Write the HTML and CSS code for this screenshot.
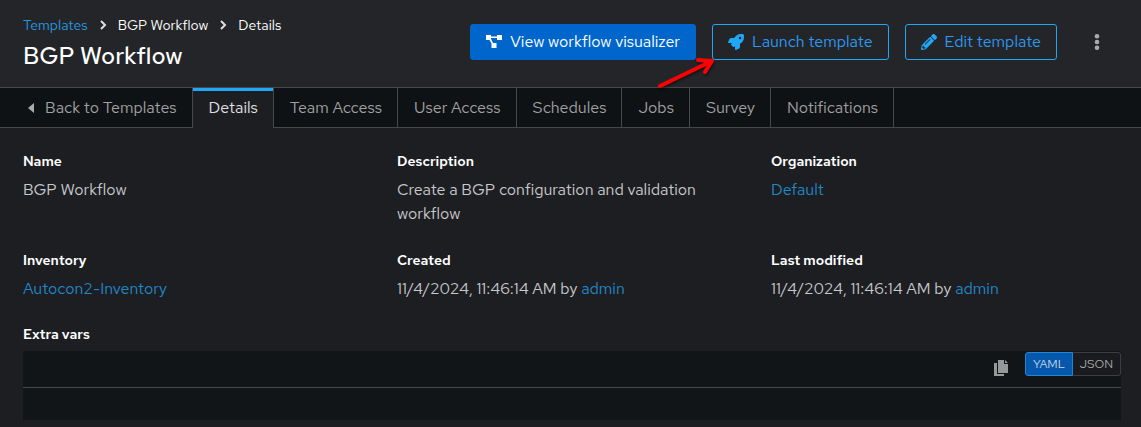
FILE: index.html
```
<!DOCTYPE html>
<html lang="en">
<head>
<meta charset="utf-8">
<title>BGP Workflow</title>
<link rel="stylesheet" href="styles.css">
</head>
<body>
<header class="page-header">
  <div class="heading">
    <nav class="breadcrumb" aria-label="Breadcrumb">
      <a class="link" href="#">Templates</a>
      <svg class="chevron" viewBox="0 0 8 10" aria-hidden="true"><path d="M2 1l4 4-4 4"/></svg>
      <span>BGP Workflow</span>
      <svg class="chevron" viewBox="0 0 8 10" aria-hidden="true"><path d="M2 1l4 4-4 4"/></svg>
      <span>Details</span>
    </nav>
    <h1 class="title">BGP Workflow</h1>
  </div>
  <div class="actions">
    <button class="button primary" type="button">
      <svg class="icon" viewBox="0 0 16 16" aria-hidden="true"><path d="M0 1h5v1.500h6V1h5v5h-5V4H5v1l2 4h3.500v5h-5V9.500L3.500 6H0z"/></svg>
      View workflow visualizer
    </button>
    <button class="button outline" type="button">
      <svg class="icon" viewBox="0 0 512 512" aria-hidden="true"><path d="M505.120 19.094c-1.189-5.531-6.658-11-12.207-12.188C460.716 0 435.507 0 410.407 0 307.175 0 245.269 55.203 199.052 128H94.838c-16.348.016-35.557 11.875-42.887 26.484L2.516 253.297A28.400 28.400 0 0 0 0 264a24.008 24.008 0 0 0 24.006 24h103.845l-22.475 22.469c-11.365 11.361-12.996 32.257 0 45.250L156.248 406.625c11.156 11.188 32.156 13.156 45.277 0L224 384.125V488a24.008 24.008 0 0 0 24 24 28.559 28.559 0 0 0 10.700-2.516l98.728-49.391c14.629-7.297 26.508-26.500 26.508-42.859V312.797c72.594-46.313 128.032-108.406 128.032-211.094.083-25.203.083-50.406-6.848-82.609zM384 168a40 40 0 1 1 40-40 40.023 40.023 0 0 1-40 40z"/></svg>
      Launch template
    </button>
    <button class="button outline" type="button">
      <svg class="icon" viewBox="0 0 512 512" aria-hidden="true"><path fill-rule="evenodd" d="M497.900 142.100l-46.100 46.100c-4.700 4.700-12.300 4.700-17 0l-111-111c-4.700-4.700-4.700-12.300 0-17l46.100-46.100c18.700-18.700 49.100-18.700 67.900 0l60.100 60.100c18.800 18.700 18.800 49.100 0 67.900zM284.200 99.800L21.600 362.400.4 483.900c-2.900 16.400 11.400 30.600 27.800 27.800l121.500-21.300 262.600-262.600c4.700-4.700 4.700-12.300 0-17l-111-111c-4.800-4.700-12.400-4.700-17.100 0zM124.100 339.900c-5.500-5.500-5.500-14.300 0-19.800l154-154c5.500-5.500 14.300-5.500 19.800 0s5.500 14.300 0 19.800l-154 154c-5.500 5.500-14.300 5.500-19.800 0zM88 424h48v36.300l-64.500 11.300-31.100-31.100L51.700 376H88v48z"/></svg>
      Edit template
    </button>
    <button class="kebab" type="button" aria-label="More actions">
      <svg class="icon" viewBox="0 0 16 16" aria-hidden="true"><circle cx="8" cy="2.300" r="2.300"/><circle cx="8" cy="8" r="2.300"/><circle cx="8" cy="13.700" r="2.300"/></svg>
    </button>
    <svg class="pointer" viewBox="0 0 60 34" aria-hidden="true"><path d="M4 29L56 4M42 3l14 1-7 11"/></svg>
  </div>
</header>
<nav class="tabs" aria-label="Template sections">
  <a class="tab back" href="#"><svg class="caret" viewBox="0 0 6 10" aria-hidden="true"><path d="M6 0v10L0 5z"/></svg>Back to Templates</a>
  <a class="tab current" href="#" aria-current="page">Details</a>
  <a class="tab" href="#">Team Access</a>
  <a class="tab" href="#">User Access</a>
  <a class="tab" href="#">Schedules</a>
  <a class="tab" href="#">Jobs</a>
  <a class="tab" href="#">Survey</a>
  <a class="tab" href="#">Notifications</a>
</nav>
<main class="content">
  <dl class="details">
    <div class="field"><dt>Name</dt><dd>BGP Workflow</dd></div>
    <div class="field"><dt>Description</dt><dd>Create a BGP configuration and validation workflow</dd></div>
    <div class="field"><dt>Organization</dt><dd><a class="link" href="#">Default</a></dd></div>
    <div class="field"><dt>Inventory</dt><dd><a class="link" href="#">Autocon2-Inventory</a></dd></div>
    <div class="field"><dt>Created</dt><dd>11/4/2024, 11:46:14 AM by <a class="link" href="#">admin</a></dd></div>
    <div class="field"><dt>Last modified</dt><dd>11/4/2024, 11:46:14 AM by <a class="link" href="#">admin</a></dd></div>
  </dl>
  <section class="vars">
    <h2 class="label">Extra vars</h2>
    <div class="editor">
      <div class="toolbar">
        <button class="copy" type="button" aria-label="Copy">
          <svg class="icon" viewBox="0 0 14 16" aria-hidden="true"><path d="M4 0h6v4h4v9H4zM11 0l3 3h-3zM0 3h3v11h7v2H0z"/></svg>
        </button>
        <div class="toggle">
          <button class="option selected" type="button" aria-pressed="true">YAML</button>
          <button class="option" type="button" aria-pressed="false">JSON</button>
        </div>
      </div>
      <div class="code"></div>
    </div>
  </section>
</main>
</body>
</html>
```
FILE: styles.css
```
* { box-sizing: border-box; }
body {
  margin: 0;
  background: #1d1e22;
  color: #c8c9cb;
  font: 400 16px/24px "Red Hat Text", Inter, sans-serif;
}
button { font: inherit; cursor: pointer; }
.link { color: #2187c8; text-decoration: none; }
.icon { width: 16px; height: 16px; fill: currentColor; flex: none; }

.page-header {
  display: flex;
  justify-content: space-between;
  padding: 14px 20px 15px 23px;
  background: #242529;
  border-bottom: 1px solid #47484c;
}
.breadcrumb {
  display: flex;
  align-items: center;
  gap: 11px;
  color: #fff;
  font-size: 14px;
  line-height: 22px;
}
.breadcrumb .link { color: #2597e0; }
.chevron { width: 8px; height: 10px; fill: none; stroke: #e0e0e0; stroke-width: 2; }
.title {
  margin: 4px 0 0;
  color: #fff;
  font: 500 24px/32px "Red Hat Text", Inter, sans-serif;
}
.actions {
  position: relative;
  display: flex;
  align-items: flex-start;
  gap: 16px;
  padding-top: 10px;
}
.button {
  display: flex;
  align-items: center;
  gap: 8px;
  height: 36px;
  padding: 0 15px;
  border: 1px solid #1fa7f8;
  border-radius: 3px;
  background: transparent;
  color: #2b9af3;
  white-space: nowrap;
}
.button .icon { color: #1fa7f8; }
.primary { background: #06c; border-color: #06c; color: #fff; }
.primary .icon { color: #fff; }
.kebab {
  display: flex;
  align-items: center;
  justify-content: center;
  width: 48px;
  height: 36px;
  padding: 0;
  border: 0;
  background: none;
  color: #aaabac;
}
.pointer {
  position: absolute;
  left: 186px;
  top: 43px;
  width: 60px;
  height: 34px;
  fill: none;
  stroke: #f00;
  stroke-width: 4;
  stroke-linecap: round;
  stroke-linejoin: round;
  filter: drop-shadow(1px 2px 1px rgba(0, 0, 0, .4));
}

.tabs { display: flex; background: #0f1215; box-shadow: inset 0 -1px #47484c; }
.tab {
  display: flex;
  align-items: center;
  height: 40px;
  padding: 0 15px 0 16px;
  border-right: 1px solid #47484c;
  color: #a0a1a2;
  text-decoration: none;
  white-space: nowrap;
}
.back { gap: 11px; padding-left: 28px; }
.caret { width: 6px; height: 10px; fill: #aaabac; }
.current {
  background: #1d1e22;
  color: #e0e0e0;
  box-shadow: inset 0 3px #1fa7f8;
}

.content { padding: 23px 20px 7px 23px; }
.details {
  display: grid;
  grid-template-columns: repeat(3, 1fr);
  gap: 24px;
  margin: 0;
}
.field dt, .label {
  margin: 0;
  color: #fff;
  font-size: 14px;
  font-weight: 600;
  line-height: 20px;
}
.field dd { margin: 7px 0 0; }
.vars { margin-top: 23px; }
.editor { margin-top: 7px; background: #111518; }
.toolbar {
  display: flex;
  justify-content: flex-end;
  align-items: flex-start;
  gap: 16px;
  height: 37px;
  padding-top: 1px;
  border-bottom: 1px solid #47484c;
}
.copy { display: flex; padding: 8px 0 0; border: 0; background: none; color: #97989a; }
.toggle { display: flex; }
.option {
  height: 24px;
  width: 48px;
  padding: 0;
  border: 1px solid #3b3d41;
  border-left: 0;
  border-radius: 0 3px 3px 0;
  background: #1a1b1f;
  color: #aaabac;
  font-size: 12px;
  line-height: 22px;
}
.selected {
  border: 1px solid #2086d0;
  border-radius: 3px 0 0 3px;
  background: #0558ab;
  color: #c5d5e6;
}
.code { height: 32px; }
```
